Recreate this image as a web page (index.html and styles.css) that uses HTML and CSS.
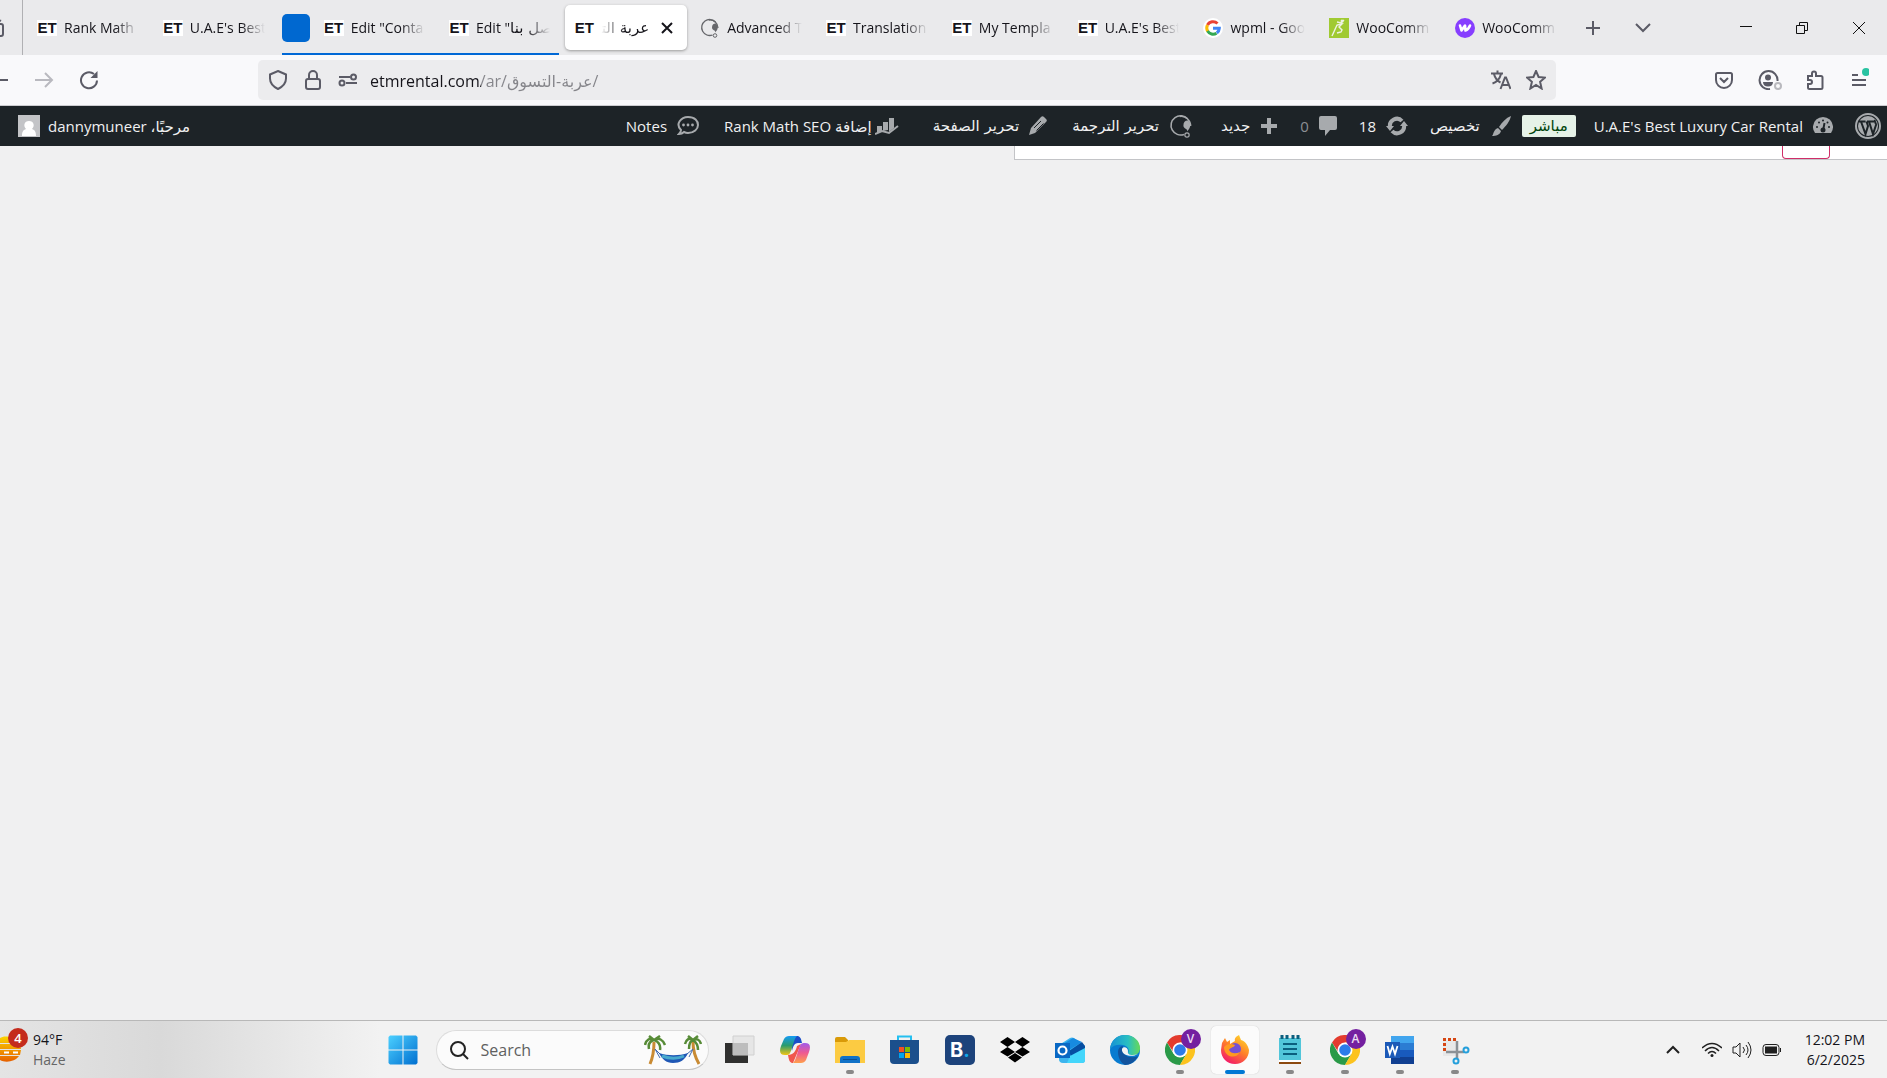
FILE: index.html
```html
<!DOCTYPE html>
<html lang="en">
<head>
    <meta charset="UTF-8">
    <meta name="viewport" content="width=device-width, initial-scale=1.0">
    <title>عربة التسوق</title>
    <link rel="stylesheet" href="styles.css">
</head>
<body>
<!-- Shared icons -->
<svg class="defs" aria-hidden="true">
    <symbol id="chrome" viewBox="0 0 30 30">
        <path fill="#e33b2e" d="M2 7.500A15 15 0 0 1 28 7.500H15L9 18Z"/>
        <path fill="#2a9a48" d="M2 7.500A15 15 0 0 0 15 30L21.500 19 15 15 8.500 18.700Z"/>
        <path fill="#fcc31e" d="M28 7.500A15 15 0 0 1 15 30L21.500 18.700 15 7.500Z"/>
        <circle cx="15" cy="15" r="7.500" fill="#fff"/>
        <circle cx="15" cy="15" r="5.800" fill="#2c7be9"/>
    </symbol>
    <symbol id="wpml" viewBox="0 0 20 20">
        <path fill="none" stroke="currentColor" stroke-width="1.300" d="M12.500 17A8 8 0 1 1 15.500 4"/>
        <path fill="none" stroke="currentColor" stroke-width="1.300" d="M9 2a8 8 0 0 1 9 8"/>
        <path fill="currentColor" d="M12 9.500C12 6.500 14 5 16 5.500 18.500 8 18.500 11.500 15 14.500 16 12 12 12.500 12 9.500Z"/>
        <circle cx="15" cy="17.500" r="1.800" fill="none" stroke="currentColor"/>
    </symbol>
</svg>

<header class="browser">
    <div class="tabstrip">
        <div class="firefox-view">
            <svg width="5" height="20" viewBox="0 0 5 20"><path d="M0 5h1a2 2 0 0 1 2 2v8a2 2 0 0 1-2 2H0M0 1.500 1 2"/></svg>
        </div>
        <nav class="tabs">
            <a class="tab" href="#"><b class="et">ET</b><span class="title">Rank Math</span></a>
            <a class="tab" href="#"><b class="et">ET</b><span class="title">U.A.E's Best</span></a>
            <div class="tab-group">
                <button class="group-label" aria-label="Tab group"></button>
                <a class="tab" href="#"><b class="et">ET</b><span class="title">Edit "Conta</span></a>
                <a class="tab" href="#"><b class="et">ET</b><span class="title">Edit "<span class="ar">&zwj;صل بنا</span></span></a>
            </div>
            <div class="tab active">
                <b class="et">ET</b><span class="title" dir="rtl"><span class="ar">عربة الت&zwj;</span></span>
                <button class="close" aria-label="Close tab"><svg width="12" height="12" viewBox="0 0 12 12"><path d="m1 1 10 10M11 1 1 11"/></svg></button>
            </div>
            <a class="tab" href="#"><svg class="favicon grey"><use href="#wpml"/></svg><span class="title">Advanced T</span></a>
            <a class="tab" href="#"><b class="et">ET</b><span class="title">Translation</span></a>
            <a class="tab" href="#"><b class="et">ET</b><span class="title">My Templa</span></a>
            <a class="tab" href="#"><b class="et">ET</b><span class="title">U.A.E's Best</span></a>
            <a class="tab" href="#">
                <svg class="favicon" viewBox="0 0 20 20"><circle cx="10" cy="10" r="10" fill="#fff"/><g fill="none" stroke-width="3"><path stroke="#ea4335" d="M4.500 7A6.300 6.300 0 0 1 14.500 5.500"/><path stroke="#fbbc05" d="M4.800 13.500A6.300 6.300 0 0 1 4.500 7"/><path stroke="#34a853" d="M13.500 15.200A6.300 6.300 0 0 1 4.600 13"/><path stroke="#4285f4" d="M10 10.300h6.300a6.300 6.300 0 0 1-2.500 4.700"/></g></svg>
                <span class="title">wpml - Goo</span>
            </a>
            <a class="tab" href="#">
                <svg class="favicon" viewBox="0 0 20 20"><path fill="#a0ca32" d="M0 0h20v20H0z"/><path fill="none" stroke="#eef3e4" stroke-width="1.400" d="M3 18 8 7l5-1-3 3 3 3-1 2-4 1M8 4l4 1 3-3"/><circle cx="13" cy="3" r="1.500" fill="#eef3e4"/></svg>
                <span class="title">WooComm</span>
            </a>
            <a class="tab" href="#">
                <svg class="favicon" viewBox="0 0 20 20"><circle cx="10" cy="10" r="10" fill="#873eff"/><path fill="none" stroke="#fff" stroke-width="2.600" stroke-linejoin="round" stroke-linecap="round" d="M5 7.500 6.500 12.500 10 7.500l.5 5C12 12 14 10 15 7.500"/></svg>
                <span class="title">WooComm</span>
            </a>
        </nav>
        <div class="strip-tools">
            <button aria-label="New tab"><svg width="16" height="16" viewBox="0 0 16 16"><path d="M8 1v14M1 8h14"/></svg></button>
            <button aria-label="List all tabs"><svg width="16" height="16" viewBox="0 0 16 16"><path d="m1 4 7 7 7-7"/></svg></button>
        </div>
        <div class="window-tools">
            <button aria-label="Minimize"><svg width="14" height="14" viewBox="0 0 14 14"><path d="M1 5.500h12"/></svg></button>
            <button aria-label="Restore"><svg width="14" height="14" viewBox="0 0 14 14"><path d="M1.500 4.500h8v8h-8zM4.500 4.500v-3h8v8h-3"/></svg></button>
            <button aria-label="Close"><svg width="14" height="14" viewBox="0 0 14 14"><path d="m1 1 12 12M13 1 1 13"/></svg></button>
        </div>
    </div>

    <div class="toolbar">
        <div class="history">
            <button aria-label="Back"><svg width="20" height="20" viewBox="0 0 20 20"><path d="M2 10h17M9 3l-7 7 7 7"/></svg></button>
            <button aria-label="Forward" disabled><svg width="20" height="20" viewBox="0 0 20 20"><path d="M1 10h17M11 3l7 7-7 7"/></svg></button>
            <button aria-label="Reload"><svg width="20" height="20" viewBox="0 0 20 20"><path d="M18 10.500A8 8 0 1 1 15 4"/><path class="solid" d="M18.500 1v7h-7Z"/></svg></button>
        </div>
        <div class="urlbar">
            <svg width="20" height="20" viewBox="0 0 20 20"><path d="M10 1 18 4.500v4c0 5-4 8.500-8 10.500-4-2-8-5.500-8-10.500v-4Z"/></svg>
            <svg width="20" height="20" viewBox="0 0 20 20"><rect x="3" y="9" width="14" height="10" rx="2"/><path d="M6 9V5a4 4 0 0 1 8 0v4"/></svg>
            <svg width="20" height="20" viewBox="0 0 20 20"><path d="M1 7h11M8 13h11"/><circle cx="15.500" cy="7" r="2.500"/><circle cx="4" cy="13" r="2.500"/></svg>
            <input type="text" aria-label="Address" value="etmrental.com/ar/عربة-التسوق/">
            <button aria-label="Translate page"><svg width="20" height="20" viewBox="0 0 20 20"><path d="M0 3.500h12M6.500.5v3M10 4c-1 4-4 8-8.500 9.500M3 4c1 4 3.500 7 6.500 8.500M9.500 19l4.500-11.500h1L19.500 19M11.500 15h6"/></svg></button>
            <button aria-label="Bookmark"><svg width="20" height="20" viewBox="0 0 20 20"><path d="m10 1 2.600 6 6.400.6-4.900 4.200L15.600 18.500 10 15l-5.600 3.500 1.500-6.700L1 7.600 7.400 7Z"/></svg></button>
        </div>
        <div class="extensions">
            <button aria-label="Pocket"><svg width="20" height="20" viewBox="0 0 20 20"><path d="M3.500 3h13A1.500 1.500 0 0 1 18 4.500V10a8 8 0 0 1-16 0V4.500A1.500 1.500 0 0 1 3.500 3ZM6 8l4 4 4-4"/></svg></button>
            <button aria-label="Account"><svg width="24" height="20" viewBox="0 0 24 20"><path d="M12 19A9 9 0 1 1 19.500 11"/><circle class="solid" cx="10" cy="7.500" r="3"/><path class="solid" d="M5 12h10c0 3-2 4.500-5 4.500S5 15 5 12Z"/><circle class="sync" cx="20" cy="16" r="3"/></svg></button>
            <button aria-label="Extensions"><svg width="20" height="20" viewBox="0 0 20 20"><path d="M3 6h4V3.500a2 2 0 0 1 4 0V6h5a1.500 1.500 0 0 1 1.500 1.500v10A1.500 1.500 0 0 1 16 19H4.500A1.500 1.500 0 0 1 3 17.500V14h2a2 2 0 0 0 0-4H3Z"/></svg></button>
            <button aria-label="Application menu"><svg width="20" height="24" viewBox="0 0 20 24"><path d="M3 7h6M3 12h14M3 17h14"/><circle class="dot" cx="17" cy="4" r="4"/></svg></button>
        </div>
    </div>
</header>

<div class="adminbar" dir="rtl" lang="ar">
    <a class="wp" href="#" aria-label="WordPress"><svg width="26" height="26" viewBox="0 0 26 26"><circle class="line" cx="13" cy="13" r="12"/><circle cx="13" cy="13" r="10"/><path class="cut" d="M3.500 8.500h7M12 8.500h7M6 8.500l4.500 12.500L13 13l-1.500-4.500M14 8.500 18 21l3-9c.5-2-2-3-1-5"/></svg></a>
    <a class="site" href="#"><svg width="20" height="20" viewBox="0 0 20 20"><path d="M2 17a10 10 0 1 1 16 0Z"/><path class="cut" d="M10 15l1.500-8"/><circle class="hole" cx="10" cy="14" r="2.500"/><circle class="hole" cx="4" cy="11" r="1"/><circle class="hole" cx="6" cy="6.500" r="1"/><circle class="hole" cx="10" cy="4.500" r="1"/><circle class="hole" cx="14.500" cy="6.500" r="1"/><circle class="hole" cx="16" cy="11" r="1"/></svg><span>U.A.E's Best Luxury Car Rental</span></a>
    <a class="live" href="#"><span class="ar">مباشر</span></a>
    <a class="customize" href="#"><svg width="22" height="22" viewBox="0 0 22 22"><path d="M21 1c-5 2-9 6-12 11l3 3c4-4 8-9 9-14ZM8 13l3 3c-1 4-5 5-9 5 2-2 1-6 6-8Z"/></svg><span class="ar">تخصيص</span></a>
    <a class="updates" href="#"><svg width="22" height="20" viewBox="0 0 22 20"><path class="thick" d="M4 11a7 7 0 0 1 12-6M18 9a7 7 0 0 1-12 6"/><path d="M0 10h8l-4 5ZM14 10h8l-4-5Z"/></svg><span>18</span></a>
    <a class="comments" href="#"><svg width="18" height="20" viewBox="0 0 18 20"><path d="M2 0h14a2 2 0 0 1 2 2v10a2 2 0 0 1-2 2h-5l-5 6v-6H2a2 2 0 0 1-2-2V2a2 2 0 0 1 2-2Z"/></svg><span>0</span></a>
    <a class="new" href="#"><svg width="18" height="18" viewBox="0 0 18 18"><path d="M7 1h4v6h6v4h-6v6H7v-6H1V7h6Z"/></svg><span class="ar">جديد</span></a>
    <a class="translate" href="#"><svg width="24" height="24"><use href="#wpml"/></svg><span class="ar">تحرير الترجمة</span></a>
    <a class="edit" href="#"><svg width="18" height="20" viewBox="0 0 18 20"><path d="M12 1a2 2 0 0 1 3 0l2 2a2 2 0 0 1 0 3L6 17l-6 2 2-7Z"/><path class="cut thin" d="m5 12 7-7M7.500 14.500l7-7"/></svg><span class="ar">تحرير الصفحة</span></a>
    <a class="rank" href="#"><svg width="24" height="18" viewBox="0 0 24 18"><path d="M2 9h5v5l-5 2ZM8 5h5v8l-5 1ZM14 1h5v10l-5 4Z"/><path class="line" d="M0 17 7 14l7 2 9-7"/></svg><span><span class="ar">إضافة</span> Rank Math SEO</span></a>
    <a class="notes" href="#"><svg width="22" height="20" viewBox="0 0 22 20"><path class="line" d="M4 14C-2 8 4 1 11 1s10 4 10 8-4 8-10 8c-2 0-3-.5-4-1-1 1-3 2-5 2 1-1 2-2 2-4Z"/><circle cx="6.500" cy="9" r="1.400"/><circle cx="11" cy="9" r="1.400"/><circle cx="15.500" cy="9" r="1.400"/></svg><span>Notes</span></a>
    <a class="user" href="#"><span><span class="ar">مرحبًا،</span> dannymuneer</span><svg width="22" height="22" viewBox="0 0 22 22"><path fill="#c3c4c7" d="M0 0h22v22H0z"/><path class="person" d="M4 21c0-4 1-6 4-7-3-3-2-8 3-8s6 5 3 8c3 1 4 3 4 7Z"/></svg></a>
</div>

<main>
    <section class="panel"><button aria-label="Button"></button></section>
</main>

<footer class="taskbar">
    <div class="weather">
        <div class="sun">
            <svg width="22" height="30" viewBox="0 0 22 30"><defs><linearGradient id="sun" x2="0" y2="1"><stop stop-color="#fbd400"/><stop offset="1" stop-color="#e66000"/></linearGradient></defs><path fill="url(#sun)" d="M0 4c4-3 14-2 18 5H0ZM0 10h20l1 5H0ZM0 16h21l-1 5H0ZM0 22h19c-4 6-14 7-19 4Z"/><path stroke="#fff" stroke-width="2" d="M4 18.500h5M13 18.500h5"/></svg>
            <span class="count">4</span>
        </div>
        <div><div>94°F</div><div class="haze">Haze</div></div>
    </div>
    <div class="apps">
        <button aria-label="Start"><svg width="30" height="30" viewBox="0 0 30 30"><defs><linearGradient id="win" x2="1" y2="1"><stop stop-color="#4cd0ff"/><stop offset="1" stop-color="#006fd0"/></linearGradient></defs><path fill="url(#win)" d="M2 .5h12.500v14H.5V2ZM15.500.5H28L29.500 2v12.500h-14ZM.5 15.500h14v14H2L.5 28ZM15.500 15.500h14V28L28 29.500H15.500Z"/></svg></button>
        <label class="search">
            <svg width="20" height="20" viewBox="0 0 20 20"><circle cx="9" cy="9" r="7"/><path d="m14 14 5 5"/></svg>
            <input type="search" placeholder="Search" aria-label="Search">
            <svg class="palms" width="58" height="30" viewBox="0 0 58 30">
                <path stroke="#c98b34" stroke-width="3" d="M6 29C9 22 10 15 10 7M55 29C51 22 49 15 49 7"/>
                <path stroke="#578b37" stroke-width="2.500" d="M10 5C6 2 2 5 1 10M10 5C6 6 4 9 5 14M10 5c5-3 9 0 11 5M10 5c4 1 7 5 6 10M10 5 5 1M10 5l6-4M49 5c-4-3-7 0-8 4M49 5c-3 1-4 4-4 9M49 5c4-2 7 0 8 4M49 5c3 2 5 5 5 10M49 5l-5-4M49 5l5-4"/>
                <path stroke="#426bb0" stroke-width="1" d="m11 14 6 6M11 14l5 9M49 14l-6 5M49 14l-4 8"/>
                <path fill="#1f57b5" d="M15 18c9 3 20 3 29 0-3 7-8 10-15 10s-11-4-14-10Z"/><path stroke="#48a9cd" stroke-width="3" d="M18 21c7 3 16 3 22 0"/>
            </svg>
        </label>
        <button aria-label="Task view"><svg width="30" height="30" viewBox="0 0 30 30"><path fill="#30302f" d="M0 8h23v20H0z"/><path fill="#e6e6e6" stroke="#d0d0d0" d="M8 1h21v19H8z"/><path fill="#bdbdbd" d="M8 8h15v12H8z"/></svg></button>
        <button aria-label="Copilot"><svg width="30" height="30" viewBox="0 0 30 30"><defs><linearGradient id="cop1" x2="0" y2="1"><stop stop-color="#159bf5"/><stop offset=".5" stop-color="#2b9c6d"/><stop offset="1" stop-color="#f2c514"/></linearGradient><linearGradient id="cop2" x2="0" y2="1"><stop stop-color="#a05bea"/><stop offset=".5" stop-color="#ef5a91"/><stop offset="1" stop-color="#ff9f4c"/></linearGradient></defs><path fill="#1b4fc9" d="M9 1h8c3 0 4 2 5 7h-4c-4 0-5 4-6 8Z"/><path fill="url(#cop1)" d="M9 1h8c-3 2-5 14-7 17-1 2-2 2-5 2-5 0-6-3-4-9L4 4c1-2 3-3 5-3Z"/><path fill="#f0574d" d="M8 20c5 0 8-4 9-9l4-2-8 19c-3 0-4-2-5-8Z"/><path fill="url(#cop2)" d="M21 28h-8c3-2 5-14 7-17 1-3 3-3 5-3 5 0 6 3 4 9l-3 8c-1 2-3 3-5 3Z"/></svg></button>
        <button class="open" aria-label="File Explorer"><svg width="30" height="30" viewBox="0 0 30 30"><path fill="#d99a08" d="M0 4a2 2 0 0 1 2-2h8l3 3v5H0z"/><path fill="#fccb42" d="M0 7h11l3-2h16v23H0z"/><path fill="#1071c7" d="M5 28v-4a3 3 0 0 1 3-3h14a3 3 0 0 1 3 3v4z"/><path stroke="#0c4f91" d="M8 24.500h14"/></svg></button>
        <button aria-label="Microsoft Store"><svg width="30" height="30" viewBox="0 0 30 30"><path stroke="#24bff0" stroke-width="2" d="M8 6V1.500h13V6"/><path fill="#1b4f8c" d="M0 5h29v20a4 4 0 0 1-4 4H4a4 4 0 0 1-4-4z"/><path fill="#f25022" d="M9 12h5v5H9z"/><path fill="#7fba00" d="M15 12h5v5h-5z"/><path fill="#00a4ef" d="M9 18h5v5H9z"/><path fill="#ffb900" d="M15 18h5v5h-5z"/></svg></button>
        <button aria-label="Booking.com"><span class="booking">B<i>.</i></span></button>
        <button aria-label="Dropbox"><svg width="30" height="30" viewBox="0 0 30 30"><path d="m7.500 2 7.500 5-7.500 5L0 7ZM22.500 2 30 7l-7.500 5L15 7ZM7.500 12l7.500 5-7.500 4.500L0 17ZM22.500 12l7.500 5-7.500 4.500L15 17ZM15 18l7 4.500-7 5-7-5Z"/></svg></button>
        <button aria-label="Outlook"><svg width="30" height="30" viewBox="0 0 30 30"><path fill="#3db5ee" d="M4 10 15 3q2-1 4 0l11 8v14a3 3 0 0 1-3 3H8a4 4 0 0 1-4-4z"/><path fill="#178ae0" d="m8 9 10-6 9 4-13 8Z"/><path fill="#064ea2" d="m14 16 13-9 3 4v3L16 22Z"/><path fill="#44d6fb" d="m15 21 15-8v12a3 3 0 0 1-3 3H12Z"/><path fill="#0868c4" d="M0 8h15v15H0z"/><circle cx="7.500" cy="15.500" r="4" fill="none" stroke="#fff" stroke-width="2.200"/></svg></button>
        <button aria-label="Edge"><svg width="30" height="30" viewBox="0 0 30 30"><defs><linearGradient id="edge" x2="1"><stop stop-color="#1791d5"/><stop offset=".6" stop-color="#29bfc2"/><stop offset="1" stop-color="#68d957"/></linearGradient></defs><circle cx="15" cy="15" r="15" fill="#087bd0"/><path fill="url(#edge)" d="M0 14C1 5 7 0 15 0c9 0 15 6 15 13 0 8-9 9-12 5 2-3 0-7-5-8C8 9 3 10 0 14Z"/><path fill="#12539d" d="M8 17c0-3 2-6 5-6-3 8 6 14 15 10-3 6-8 9-13 9-4-2-7-7-7-13Z"/><path fill="#f3f3f3" d="M12 14c1-3 6-2 6 2-1 4 4 5 10 3-7 4-17 1-16-5Z"/></svg></button>
        <button class="open" aria-label="Chrome"><svg width="30" height="30"><use href="#chrome"/></svg><span class="profile">V</span></button>
        <button class="open current" aria-label="Firefox"><svg width="30" height="30" viewBox="0 0 30 30"><defs><linearGradient id="fox" x1=".9" x2=".3" y2="1"><stop stop-color="#ffe32c"/><stop offset=".5" stop-color="#ff8129"/><stop offset="1" stop-color="#f3196a"/></linearGradient></defs><path fill="url(#fox)" d="M2 8 5 3l2 4 3-2v4l5-3c-1-3 2-5 4-6l2 5c4 1 7 5 8 10 0 8-6 14-14 14S1 23 1 15Z"/><circle cx="15" cy="14" r="6" fill="#7650d5"/><path fill="#ff9a20" d="M4 12c4-4 8-3 11-2-1 3-5 2-6 5 2 4 7 4 11 2-4 8-16 5-16-5Z"/></svg></button>
        <button class="open" aria-label="Notepad"><svg width="30" height="30" viewBox="0 0 30 30"><path fill="#52c6da" d="M4 3h22v23H4z"/><path fill="#8c4a10" d="M4 27h22v2H4z"/><path fill="#fff" d="M4 25h22v2H4z"/><g stroke="#0b5f7e" stroke-width="2"><path d="M8 9h14M8 14h14M8 19h14"/><path stroke-width="3" d="M7 0v4M12 0v4M18 0v4M23 0v4"/></g></svg></button>
        <button class="open" aria-label="Chrome"><svg width="30" height="30"><use href="#chrome"/></svg><span class="profile">A</span></button>
        <button class="open" aria-label="Word"><svg width="30" height="30" viewBox="0 0 30 30"><path fill="#41a5ee" d="M6 1h23v7H6z"/><path fill="#2b7cd3" d="M6 8h23v7H6z"/><path fill="#185abd" d="M6 15h23v7H6z"/><path fill="#103f91" d="M6 22h23v7H6z"/><path fill="#1b59b7" d="M0 7h15v16H0z"/><path stroke="#fff" stroke-width="1.800" d="m2.500 11 2.300 8L7.500 11.500 10 19l2.500-8"/></svg></button>
        <button class="open" aria-label="Snipping Tool"><svg width="30" height="30" viewBox="0 0 30 30"><path fill="#e8e8e8" d="M3 5h14v16H3z"/><path stroke="#d64612" stroke-width="3" stroke-dasharray="3 2" d="M4.500 16V4.500H18"/><path stroke="#8b9196" stroke-width="2.500" d="M17 6v18M6 17h18"/><g stroke="#249fdb" stroke-width="2"><circle cx="26" cy="15" r="2.500"/><circle cx="16" cy="26" r="2.500"/></g></svg></button>
    </div>
    <div class="tray">
        <svg width="16" height="20" viewBox="0 0 16 20"><path stroke-width="2" d="m2 13 6-6 6 6"/></svg>
        <div class="status">
            <svg width="20" height="20" viewBox="0 0 20 20"><path stroke-width="1.500" d="M0 8q10-9 20 0M3 11q7-7 14 0M6 13.500q4-4 8 0"/><circle class="solid" cx="10" cy="15.500" r="1.500"/></svg>
            <svg width="20" height="20" viewBox="0 0 20 20"><path d="M1 7h3l4-4v14l-4-4H1ZM11 7q3 3 0 6M14 5q4 5 0 10M16 2q6 8 0 16"/></svg>
            <svg width="20" height="20" viewBox="0 0 20 20"><rect x="1" y="4.500" width="16" height="11" rx="3"/><path class="solid" d="M3 6.500h12v7H3ZM18 8h1v4h-1Z"/></svg>
        </div>
        <div class="clock"><div>12:02 PM</div><div>6/2/2025</div></div>
    </div>
</footer>
</body>
</html>
```
FILE: styles.css
```css
* {
    box-sizing: border-box;
}
body {
    margin: 0;
    min-height: 100vh;
    display: flex;
    flex-direction: column;
    background: #f0f0f1;
    font-family: "Open Sans", "DejaVu Sans", sans-serif;
    font-size: 14px;
    color: #15141a;
    overflow: hidden;
}
a {
    color: inherit;
    text-decoration: none;
}
button {
    border: 0;
    padding: 0;
    background: none;
    color: inherit;
    font: inherit;
    display: flex;
    align-items: center;
    justify-content: center;
}
input {
    border: 0;
    outline: 0;
    padding: 0;
    background: none;
    font: inherit;
    min-width: 0;
    flex: 1;
}
svg {
    display: block;
    flex: none;
    fill: none;
}
.defs {
    position: absolute;
    width: 0;
    height: 0;
}
.ar {
    font-family: "DejaVu Sans", sans-serif;
    font-size: 15px;
}

/* Tab strip */
.tabstrip {
    display: flex;
    height: 55px;
    background: #eaeaec;
}
.firefox-view {
    width: 23px;
    margin-right: 3px;
    padding-top: 19px;
    border-right: 1px solid #b0b0b3;
}
.firefox-view svg,
.strip-tools svg,
.history svg,
.urlbar svg,
.extensions svg {
    stroke: #5b5b66;
    stroke-width: 2;
}
.tabs {
    flex: 1;
    min-width: 0;
    display: flex;
}
.tab {
    flex: 1 1 0;
    min-width: 0;
    height: 45px;
    margin: 5px 2px;
    padding: 0 9px;
    display: flex;
    align-items: center;
    gap: 7px;
    border-radius: 5px;
}
.tab-group {
    flex: 2 1 78px;
    min-width: 0;
    display: flex;
    position: relative;
}
.tab-group::after {
    content: "";
    position: absolute;
    left: 4px;
    right: 4px;
    bottom: 0;
    height: 2px;
    background: #0068d6;
}
.group-label {
    flex: none;
    width: 28px;
    height: 28px;
    margin: 14px 3px 14px 4px;
    border-radius: 5px;
    background: #0068d0;
}
.active {
    background: #fff;
    box-shadow: 0 1px 3px #999;
}
.et {
    flex: none;
    width: 20px;
    height: 16px;
    background: #fff;
    font: bold 15px/16px "Liberation Sans", sans-serif;
    text-align: center;
}
.favicon {
    width: 20px;
    height: 20px;
}
.grey {
    color: #66676b;
}
.title {
    flex: 1;
    min-width: 0;
    overflow: hidden;
    white-space: nowrap;
    line-height: 24px;
    -webkit-mask-image: linear-gradient(to left, transparent 2px, #000 26px);
    mask-image: linear-gradient(to left, transparent 2px, #000 26px);
}
.title .ar {
    font-size: 15px;
}
.title[dir="rtl"] {
    -webkit-mask-image: linear-gradient(to right, transparent, #000 24px);
    mask-image: linear-gradient(to right, transparent, #000 24px);
}
.close svg {
    stroke: #15141a;
    stroke-width: 2;
}
.close {
    width: 22px;
    height: 24px;
}
.strip-tools {
    display: flex;
    gap: 10px;
    width: 148px;
    padding-left: 3px;
}
.strip-tools button {
    width: 40px;
}
.window-tools {
    display: flex;
    width: 169px;
}
.window-tools button {
    flex: 1;
}
.window-tools svg {
    stroke: #111;
}

/* Navigation toolbar */
.toolbar {
    display: flex;
    align-items: center;
    height: 51px;
    background: #f9f9fb;
    border-bottom: 1px solid #ccccd0;
}
.history {
    display: flex;
    gap: 25px;
    width: 258px;
    margin-left: -11px;
}
.history button:disabled {
    opacity: .4;
}
.urlbar {
    flex: 1;
    display: flex;
    align-items: center;
    gap: 15px;
    height: 40px;
    margin-left: 11px;
    padding: 0 10px;
    border-radius: 5px;
    background: #ececee;
}
.urlbar input {
    height: 30px;
    margin-left: -3px;
    padding-top: 2px;
    font-size: 16px;
    color: transparent;
    /* host is darker than the path */
    background: linear-gradient(to right, #15141a 111px, #85858a 111px);
    -webkit-background-clip: text;
    background-clip: text;
}
.solid {
    fill: #5b5b66;
    stroke: none;
}
.extensions {
    display: flex;
    justify-content: space-between;
    width: 331px;
    padding: 0 18px 0 158px;
}
.extensions .sync {
    stroke: #b9b9be;
}
.extensions .dot {
    fill: #2ac3a2;
    stroke: none;
}

/* WordPress admin bar */
.adminbar {
    display: flex;
    height: 40px;
    padding: 0 6px 0 18px;
    background: #1d2327;
    color: #f0f0f1;
    font-size: 15px;
    white-space: nowrap;
}
.adminbar a {
    display: flex;
    align-items: center;
    gap: 10px;
    margin-right: 22px;
}
.adminbar svg {
    color: #a7aaad;
    fill: #a7aaad;
}
.adminbar .line {
    fill: none;
    stroke: #a7aaad;
    stroke-width: 2;
}
.adminbar .thick {
    fill: none;
    stroke: #a7aaad;
    stroke-width: 4;
}
.adminbar .cut {
    fill: none;
    stroke: #1d2327;
    stroke-width: 2;
}
.adminbar .thin {
    stroke-width: 1;
}
.adminbar .hole {
    fill: #1d2327;
}
.adminbar .person {
    fill: #fff;
}
.adminbar .wp {
    margin-right: 0;
}
.adminbar .live {
    margin-right: 18px;
}
.adminbar .customize {
    margin-right: 10px;
}
.live .ar {
    padding: 0 8px;
    line-height: 22px;
    border-radius: 2px;
    background: #e6f2e8;
    color: #00450c;
}
.comments span {
    color: #8c8f94;
}
.adminbar .translate {
    margin-right: 28px;
}
.adminbar .edit,
.adminbar .notes {
    margin-right: 25px;
}
.adminbar .rank {
    gap: 3px;
    margin-right: 34px;
}
.adminbar .user {
    gap: 8px;
    margin-right: auto;
}

/* Page */
main {
    flex: 1;
}
.panel {
    height: 14px;
    margin-left: 1014px;
    padding-right: 57px;
    border: solid #c3c4c7;
    border-width: 0 0 1px 1px;
    background: #fff;
    display: flex;
    justify-content: flex-end;
}
.panel button {
    width: 48px;
    height: 13px;
    border: 1px solid #cf2e68;
    border-top: 0;
    border-radius: 0 0 4px 4px;
}

/* Windows taskbar */
.taskbar {
    display: grid;
    grid-template-columns: minmax(0, 1fr) auto minmax(0, 1fr);
    align-items: center;
    height: 58px;
    border-top: 1px solid #b8b8b8;
    background: linear-gradient(to right, #e4e4e4, #d9d9d9 160px, #f2f2f2 380px);
    line-height: 20px;
}
.weather {
    display: flex;
    gap: 11px;
}
.sun {
    position: relative;
    padding-top: 4px;
}
.count {
    position: absolute;
    left: 8px;
    top: -2px;
    width: 20px;
    height: 20px;
    border-radius: 50%;
    background: #c42b1c;
    color: #fff;
    font-size: 13px;
    font-weight: 600;
    text-align: center;
}
.haze {
    color: #666;
}
.apps {
    display: flex;
    align-items: center;
    height: 57px;
    margin-right: 29px;
}
.apps button {
    position: relative;
    width: 55px;
    height: 48px;
}
.search {
    display: flex;
    align-items: center;
    gap: 12px;
    width: 273px;
    height: 40px;
    margin: 0 4px 0 5px;
    padding: 0 6px 0 12px;
    border: 1px solid #dcdcdc;
    border-bottom-color: #c4c4c4;
    border-radius: 20px;
    background: #fbfbfb;
    font-size: 16px;
}
.search > svg:first-child {
    stroke: #222;
    stroke-width: 2;
}
.search input::placeholder {
    color: #606060;
    opacity: 1;
}
.booking {
    width: 30px;
    height: 30px;
    border-radius: 5px;
    background: #1d437b;
    color: #fff;
    font: bold 20px/30px Inter, sans-serif;
}
.booking i {
    color: #12a5e8;
    font-style: normal;
}
.apps button[aria-label="Dropbox"] svg {
    fill: #000;
}
.open::after {
    content: "";
    position: absolute;
    left: calc(50% - 4px);
    bottom: 0;
    width: 8px;
    height: 4px;
    border-radius: 2px;
    background: #888;
}
.apps .current {
    width: 48px;
    margin: 0 4px 0 3px;
    border-radius: 5px;
    background: #fbfbfb;
    box-shadow: 0 0 1px #bbb;
}
.current::after {
    left: 14px;
    width: 20px;
    background: #0078d4;
}
.profile {
    position: absolute;
    left: 28px;
    top: 3px;
    width: 20px;
    height: 20px;
    border-radius: 50%;
    background: #7420a0;
    color: #eadcf2;
    font-size: 12px;
    font-weight: 600;
}
.tray {
    display: flex;
    align-items: center;
    justify-content: flex-end;
    gap: 21px;
    padding-right: 22px;
}
.tray svg {
    stroke: #202020;
    stroke-width: 1;
}
.tray .solid {
    fill: #202020;
}
.status {
    display: flex;
    gap: 10px;
}
.clock {
    min-width: 62px;
    text-align: right;
}
```
